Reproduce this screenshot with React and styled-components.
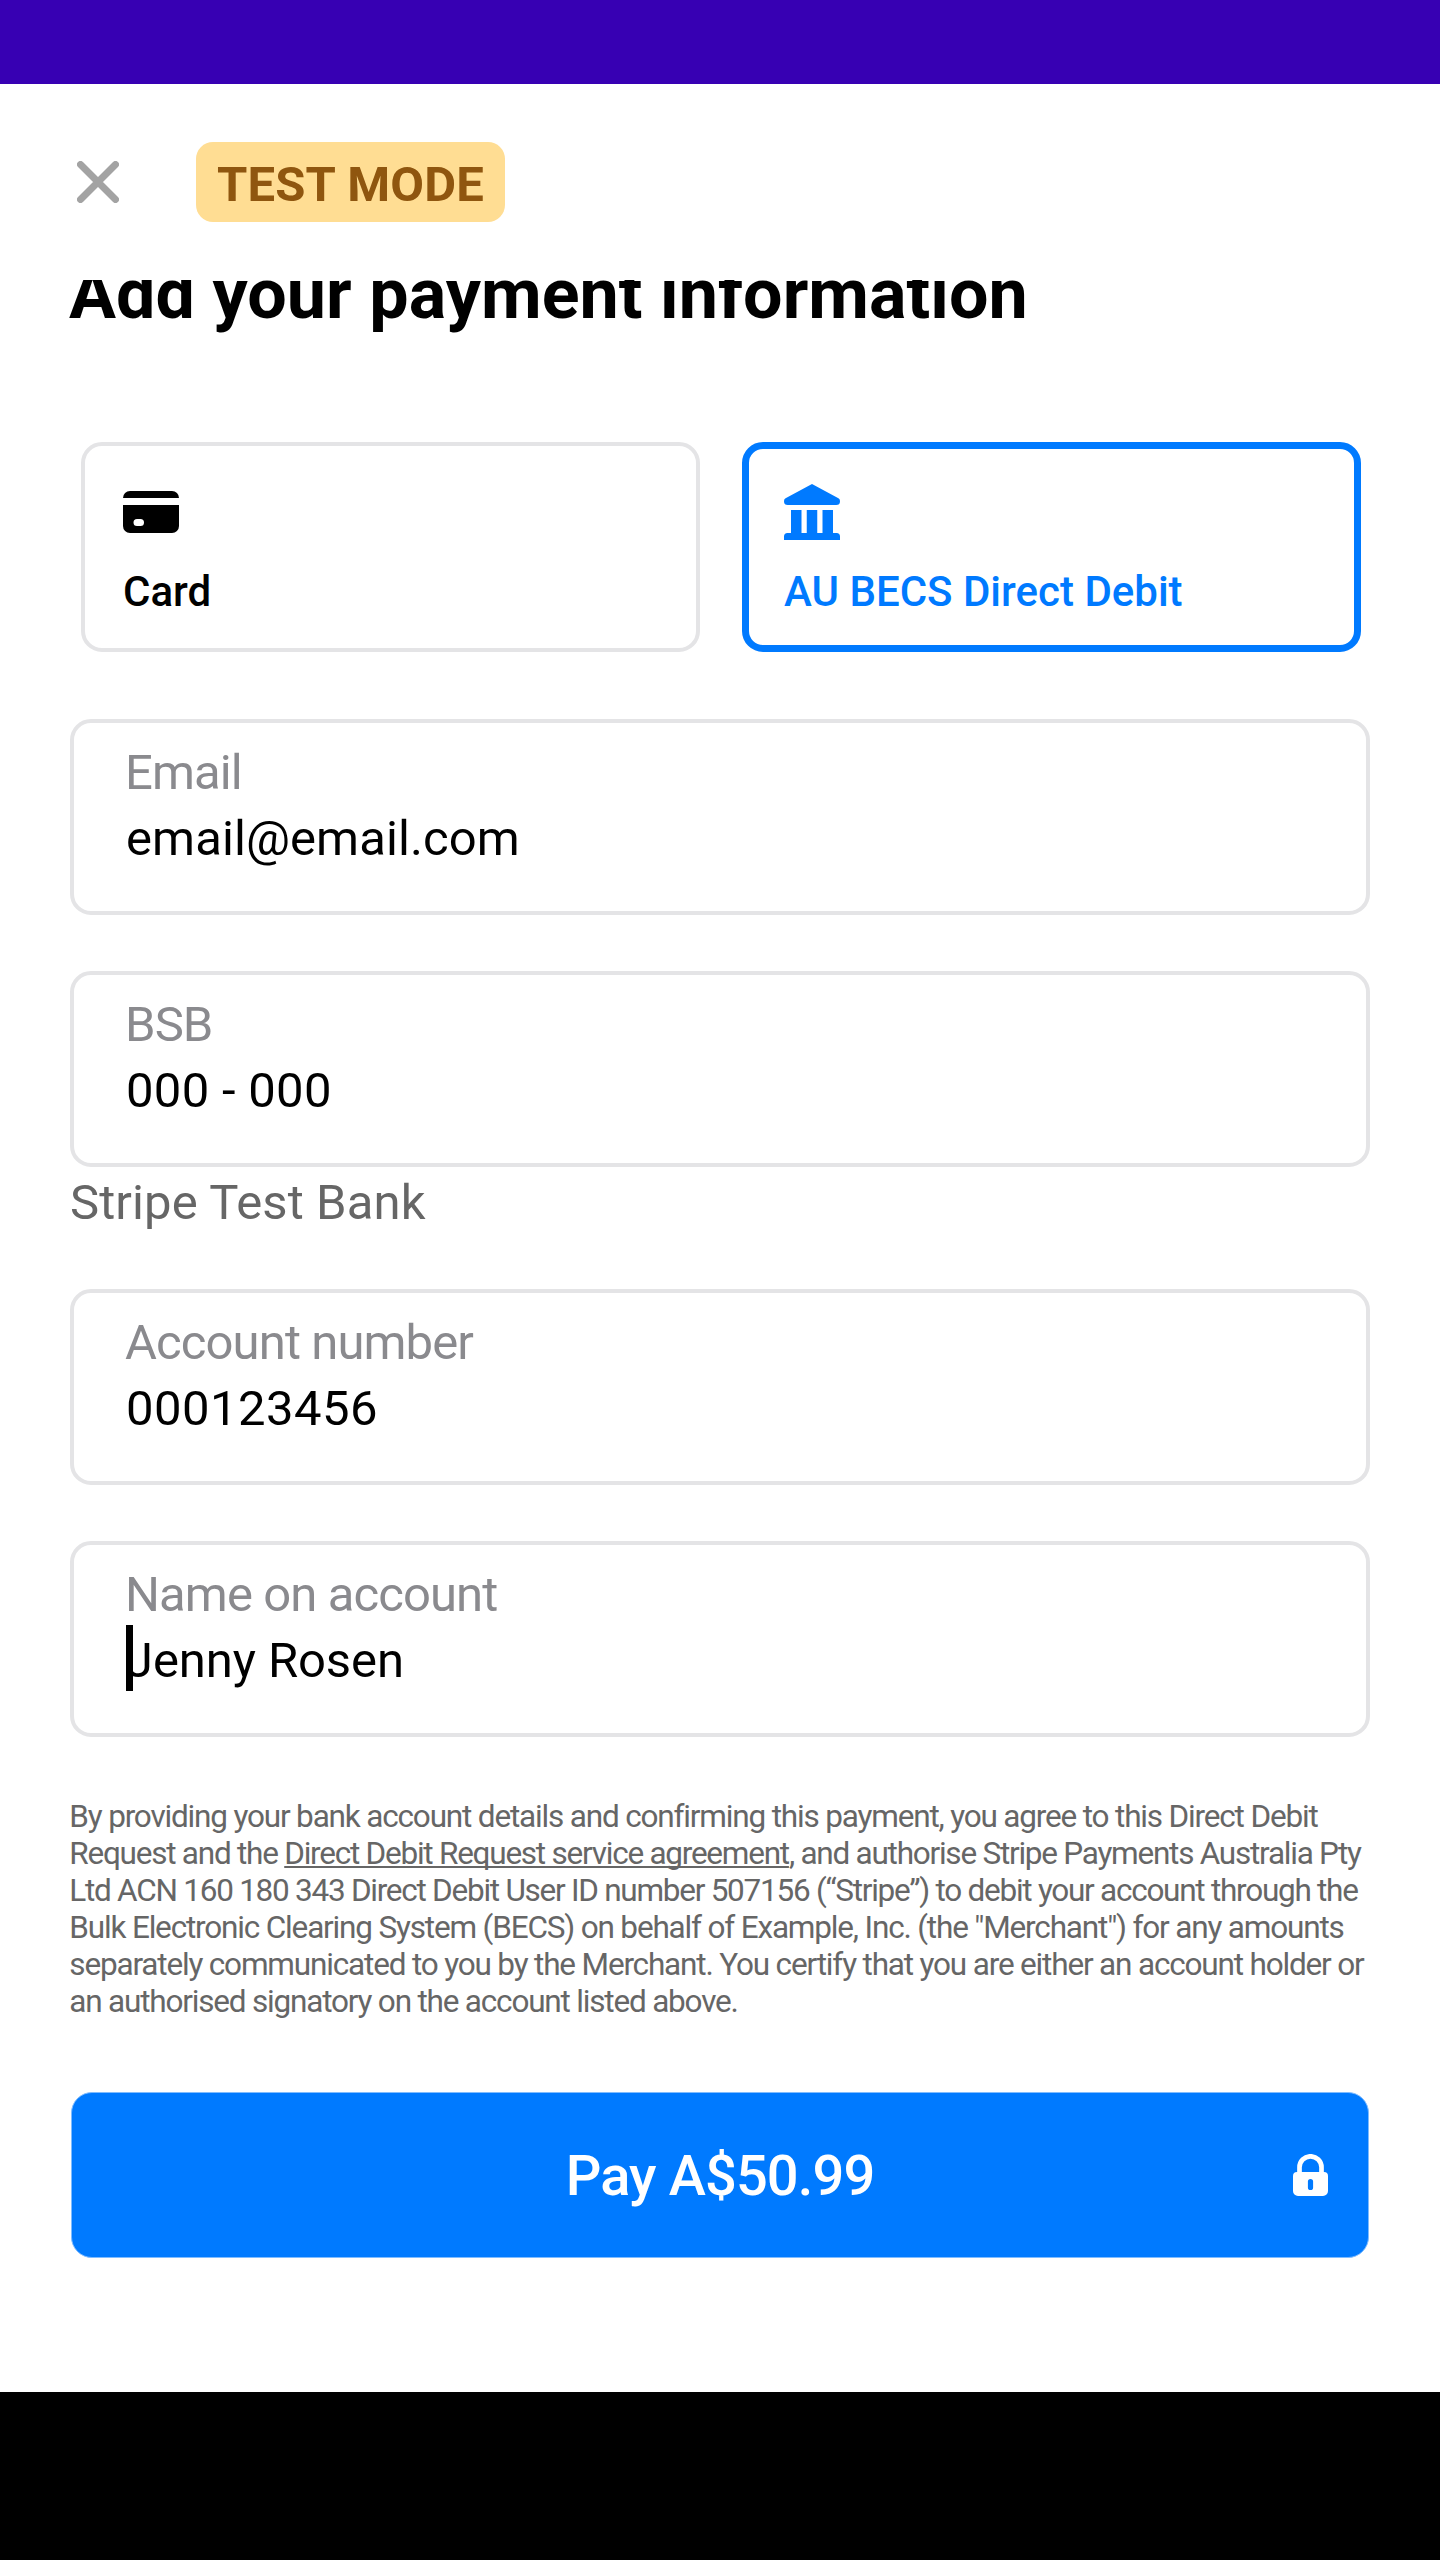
import React from "react";
import styled, { createGlobalStyle } from "styled-components";

const GlobalStyle = createGlobalStyle`
  *, *::before, *::after { box-sizing: border-box; }
  body { margin: 0; background: #fff; font-family: Roboto, "Liberation Sans", sans-serif; }
`;

const Screen = styled.div`
  display: flex;
  flex-direction: column;
  width: 1440px;
  height: 2560px;
  overflow: hidden;
  background: #fff;
  color: #000;
`;

const StatusBar = styled.div`
  flex: none;
  height: 84px;
  background: #3700b3;
`;

const NavigationBar = styled.div`
  flex: none;
  height: 168px;
  background: #000;
`;

const TopBar = styled.header`
  flex: none;
  display: flex;
  align-items: flex-start;
  gap: 77px;
  height: 196px;
  padding: 58px 77px 0;
`;

const CloseButton = styled.button`
  display: flex;
  margin-top: 19px;
  padding: 0;
  border: 0;
  background: none;
`;

const ModeBadge = styled.span`
  width: 309px;
  height: 80px;
  padding-top: 4px;
  border-radius: 17px;
  background: #ffdd93;
  color: #8f560f;
  font-size: 49px;
  font-weight: 700;
  line-height: 77px;
  letter-spacing: 0.2px;
  text-align: center;
`;

const Sheet = styled.main`
  flex: 1;
  min-height: 0;
  overflow: hidden;
  padding: 0 70px;
`;

const Title = styled.h1`
  margin: -27px 0 0 -1px;
  font-size: 70px;
  font-weight: 700;
  line-height: 82px;
  letter-spacing: 0.06px;
`;

const Methods = styled.div`
  display: grid;
  grid-template-columns: 619px 619px;
  gap: 42px;
  margin: 107px 0 0 11px;
`;

const Method = styled.button`
  display: flex;
  flex-direction: column;
  align-items: flex-start;
  height: 210px;
  padding: ${(p) => (p.$selected ? "35px 35px 0" : "38px 38px 0")};
  border: ${(p) => (p.$selected ? "7px solid #007aff" : "4px solid #e4e4e6")};
  border-radius: 21px;
  background: #fff;
  color: ${(p) => (p.$selected ? "#007aff" : "#000")};
  font-family: inherit;
`;

const MethodIcon = styled.svg`
  width: 56px;
  height: 56px;
  fill: currentColor;
`;

const MethodName = styled.span`
  margin-top: 27px;
  font-size: 42px;
  font-weight: 500;
  line-height: 49px;
  white-space: nowrap;
`;

const Fields = styled.div`
  display: flex;
  flex-direction: column;
  margin-top: 67px;
`;

const Field = styled.div`
  display: flex;
  flex-direction: column;
  height: 196px;
  margin-bottom: ${(p) => (p.$hint ? "0" : "56px")};
  padding: 16px 52px 0;
  border: 4px solid #e4e4e6;
  border-radius: 21px;
  font-size: 49px;
  white-space: nowrap;
`;

const FieldLabel = styled.span`
  margin-left: -1px;
  color: #8a8a8e;
  line-height: 67px;
  letter-spacing: -0.9px;
`;

const FieldValue = styled.span`
  position: relative;
  line-height: 65px;
  letter-spacing: ${(p) => p.$tracking || 0}px;
`;

const Caret = styled.span`
  position: absolute;
  left: 0;
  top: -3px;
  width: 7px;
  height: 66px;
  background: #000;
`;

const Hint = styled.div`
  margin: 2px 0 53px;
  color: #666;
  font-size: 49px;
  line-height: 67px;
  letter-spacing: 0.12px;
`;

const Mandate = styled.p`
  margin: 5px 0 0 -0.7px;
  color: #666;
  font-size: 31.5px;
  line-height: 37px;
`;

const MandateLine = styled.span`
  display: block;
  letter-spacing: ${(p) => p.$tracking}px;
  white-space: nowrap;
`;

const MandateLink = styled.a`
  color: inherit;
  text-decoration: underline;
  text-decoration-thickness: 2px;
  text-decoration-skip-ink: none;
  text-underline-offset: 2px;
`;

const PayButton = styled.button`
  display: grid;
  grid-template-columns: 1fr auto 1fr;
  align-items: center;
  width: 1298px;
  height: 166px;
  margin: 72px 0 0 1px;
  padding: 0 40px;
  border: 1px solid #7fbcff;
  border-radius: 21px;
  background: #007aff;
  color: #fff;
  font-family: inherit;
`;

const PayLabel = styled.span`
  grid-column: 2;
  padding-top: 2px;
  font-size: 56px;
  font-weight: 500;
  line-height: 66px;
  letter-spacing: -0.88px;
`;

const LockIcon = styled.svg`
  justify-self: end;
  width: 35px;
  height: 42px;
`;

function CardGlyph() {
  return (
    <MethodIcon viewBox="0 0 16 16">
      <path d="M0 4a2 2 0 0 1 2-2h12a2 2 0 0 1 2 2z" />
      <path
        fillRule="evenodd"
        d="M0 6h16v6a2 2 0 0 1-2 2H2a2 2 0 0 1-2-2zM4 10a1 1 0 0 0 0 2h1a1 1 0 0 0 0-2z"
      />
    </MethodIcon>
  );
}

function BankGlyph() {
  return (
    <MethodIcon viewBox="0 0 16 16">
      <path d="M8 0l7.55 4.1A.9.9 0 0 1 16 4.9 1.1 1.1 0 0 1 14.9 6H1.1A1.1 1.1 0 0 1 0 4.9a.9.9 0 0 1 .45-.8z" />
      <path d="M2 7.4h3V14h1.5V7.4h3V14H11V7.4h3V14h1a1 1 0 0 1 1 1v1H0v-1a1 1 0 0 1 1-1h1z" />
    </MethodIcon>
  );
}

const fields = [
  { label: "Email", value: "email@email.com", tracking: 0.1 },
  { label: "BSB", value: "000 - 000", tracking: 0.3, hint: "Stripe Test Bank" },
  { label: "Account number", value: "000123456", tracking: 0.45 },
  { label: "Name on account", value: "Jenny Rosen", tracking: -0.1, focused: true },
];

export default function App() {
  return (
    <Screen>
      <GlobalStyle />
      <StatusBar />
      <TopBar>
        <CloseButton aria-label="Close">
          <svg width="42" height="42" viewBox="0 0 42 42" fill="none" stroke="#a3a3a3" strokeWidth="7" strokeLinecap="round">
            <path d="M3.5 3.5l35 35M38.5 3.5l-35 35" />
          </svg>
        </CloseButton>
        <ModeBadge>TEST MODE</ModeBadge>
      </TopBar>
      <Sheet>
        <Title>Add your payment information</Title>
        <Methods>
          <Method>
            <CardGlyph />
            <MethodName>Card</MethodName>
          </Method>
          <Method $selected>
            <BankGlyph />
            <MethodName>AU BECS Direct Debit</MethodName>
          </Method>
        </Methods>
        <Fields>
          {fields.map((field) => (
            <React.Fragment key={field.label}>
              <Field $hint={field.hint}>
                <FieldLabel>{field.label}</FieldLabel>
                <FieldValue $tracking={field.tracking}>
                  {field.focused && <Caret />}
                  {field.value}
                </FieldValue>
              </Field>
              {field.hint && <Hint>{field.hint}</Hint>}
            </React.Fragment>
          ))}
        </Fields>
        <Mandate>
          <MandateLine $tracking={-1.17}>
            By providing your bank account details and confirming this payment, you agree to this Direct Debit{" "}
          </MandateLine>
          <MandateLine $tracking={-1.24}>
            Request and the <MandateLink>Direct Debit Request service agreement</MandateLink>, and authorise Stripe
            Payments Australia Pty{" "}
          </MandateLine>
          <MandateLine $tracking={-1.26}>
            Ltd ACN 160 180 343 Direct Debit User ID number 507156 (“Stripe”) to debit your account through the{" "}
          </MandateLine>
          <MandateLine $tracking={-1.17}>
            Bulk Electronic Clearing System (BECS) on behalf of Example, Inc. (the "Merchant") for any amounts{" "}
          </MandateLine>
          <MandateLine $tracking={-1.17}>
            separately communicated to you by the Merchant. You certify that you are either an account holder or{" "}
          </MandateLine>
          <MandateLine $tracking={-1.19}>an authorised signatory on the account listed above.</MandateLine>
        </Mandate>
        <PayButton>
          <PayLabel>Pay A$50.99</PayLabel>
          <LockIcon viewBox="0 0 35 42">
            <path d="M6.5 20v-6.7a11 11 0 0 1 22 0V20" fill="none" stroke="#fff" strokeWidth="4.7" />
            <path
              fill="#fff"
              fillRule="evenodd"
              d="M4 18h27a4 4 0 0 1 4 4v15a5 5 0 0 1-5 5H5a5 5 0 0 1-5-5V22a4 4 0 0 1 4-4zM17.5 25a2.6 2.6 0 0 0-2.6 2.6v5.8a2.6 2.6 0 0 0 5.2 0v-5.8a2.6 2.6 0 0 0-2.6-2.6z"
            />
          </LockIcon>
        </PayButton>
      </Sheet>
      <NavigationBar />
    </Screen>
  );
}
